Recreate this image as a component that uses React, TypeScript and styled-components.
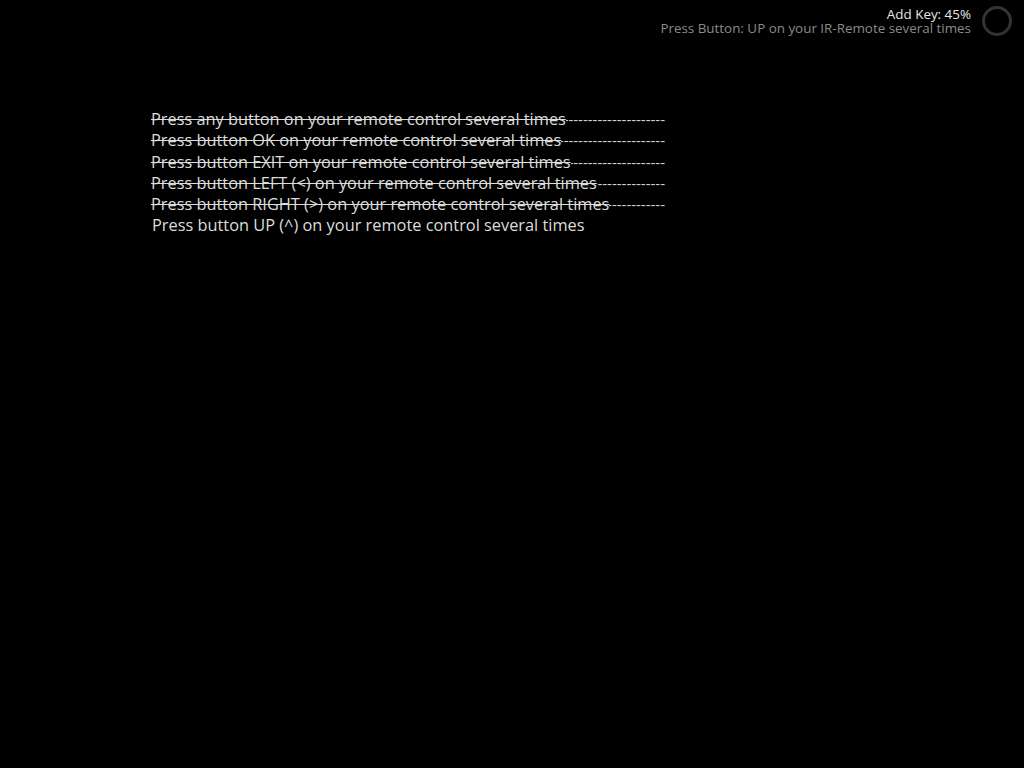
import React from 'react'
import styled, { createGlobalStyle } from 'styled-components'

const Global = createGlobalStyle`
  html, body { margin: 0; padding: 0; background: #000; }
  body { font-family: "Open Sans", "Noto Sans", sans-serif; }
`

const Screen = styled.div`
  width: 1024px;
  height: 768px;
  background: #000;
  display: flex;
  flex-direction: column;
`

const Header = styled.div`
  display: flex;
  justify-content: flex-end;
  align-items: center;
  gap: 10px;
  padding: 5px 11px 0 0;
`

const Status = styled.div`
  display: flex;
  flex-direction: column;
  align-items: flex-end;
  font-size: 13.4px;
  line-height: 14px;
`

const Title = styled.div`
  color: #e6e6e6;
`

const Sub = styled.div`
  color: #8a8a8a;
`

const Steps = styled.div`
  margin: 72px 0 0 151px;
  width: 514px;
  display: flex;
  flex-direction: column;
`

const Step = styled.div<{ done?: boolean }>`
  display: flex;
  font-size: 16.35px;
  line-height: 21.3px;
  color: #dcdcdc;
  white-space: nowrap;
  overflow: hidden;
  padding-left: ${p => (p.done ? 0 : 1)}px;
`

const Label = styled.span<{ done?: boolean }>`
  text-decoration: ${p => (p.done ? 'line-through' : 'none')};
  flex: none;
`

const Fill = styled.span`
  flex: 1;
  overflow: hidden;
  direction: rtl;
  font-size: 15px;
  color: #d0d0d0;
`

const steps = [
  'Press any button on your remote control several times',
  'Press button OK on your remote control several times',
  'Press button EXIT on your remote control several times',
  'Press button LEFT (<) on your remote control several times',
  'Press button RIGHT (>) on your remote control several times',
  'Press button UP (^) on your remote control several times',
]
const current = 5

function Spinner() {
  return (
    <svg width="32" height="32" viewBox="0 0 32 32">
      <circle cx="16" cy="16" r="13.5" fill="none" stroke="#333" strokeWidth="3" />
    </svg>
  )
}

export default function App() {
  return (
    <>
      <Global />
      <Screen>
        <Header>
          <Status>
            <Title>Add Key: 45%</Title>
            <Sub>Press Button: UP on your IR-Remote several times</Sub>
          </Status>
          <Spinner />
        </Header>
        <Steps>
          {steps.map((s, i) => (
            <Step key={i} done={i < current}>
              <Label done={i < current}>{s}</Label>
              {i < current && <Fill>{'-'.repeat(40)}</Fill>}
            </Step>
          ))}
        </Steps>
      </Screen>
    </>
  )
}
